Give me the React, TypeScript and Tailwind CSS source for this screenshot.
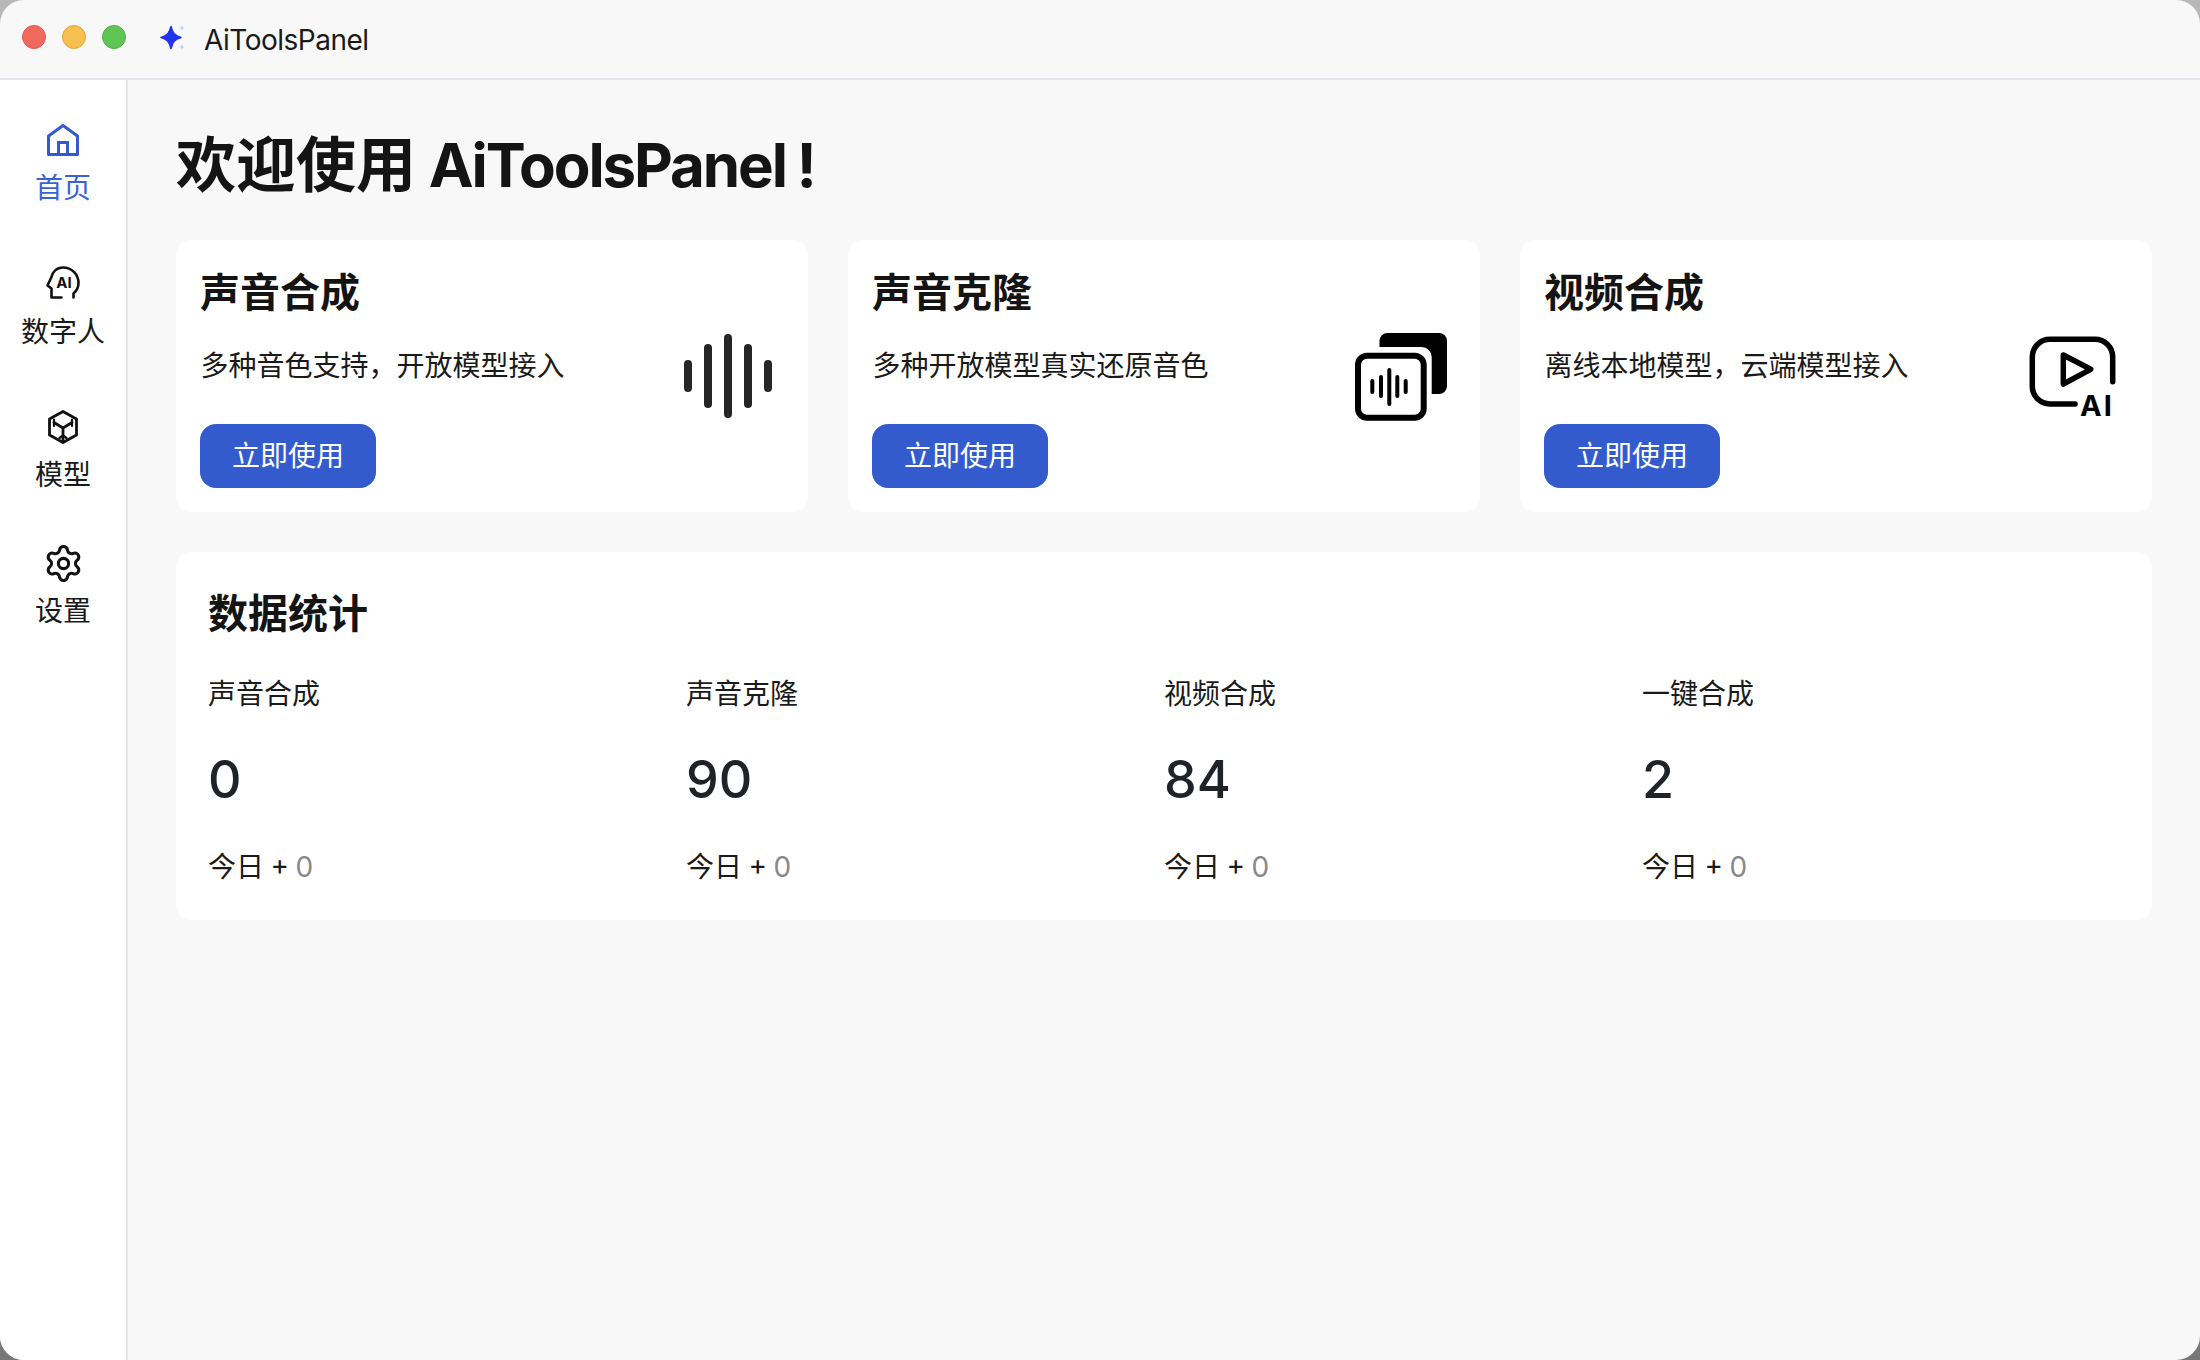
import type { ReactNode } from 'react';

const FONT = "font-['Inter','Noto_Sans_CJK_SC',sans-serif]";

function HomeIcon() {
  return (
    <svg width="34" height="34" viewBox="0 0 34 34" fill="none" stroke="#345bce" strokeWidth="3">
      <path d="M2.5 13 L17 2.5 L31.5 13 V31.5 H2.5 Z" strokeLinejoin="round" />
      <path d="M12.5 31.5 V19.5 H21.5 V31.5" />
    </svg>
  );
}

function HeadIcon() {
  return (
    <svg width="34" height="34" viewBox="0 0 34 34" fill="none" stroke="#111" strokeWidth="2.6" strokeLinecap="round" strokeLinejoin="round">
      <path d="M27.5 31.5 V27.5 C30.5 25 32.5 22 32.5 17 C32.5 8 25.5 1.5 17 1.5 C10.5 1.5 6.5 6 5.5 11 L1.5 19.5 L5.5 22.5 V31.5 H15.5" />
      <text x="18" y="21.5" textAnchor="middle" fontSize="15" fontWeight="700" fontFamily="Inter" fill="#111" stroke="none">AI</text>
    </svg>
  );
}

function CubeIcon() {
  return (
    <svg width="34" height="34" viewBox="0 0 34 34" fill="none" stroke="#111" strokeWidth="2.8" strokeLinejoin="round" strokeLinecap="round">
      <path d="M17 1.5 L30.5 9 V25 L17 32.5 L3.5 25 V9 Z" />
      <path d="M8 12.5 L17 18 L26 12.5 M17 18 V31" />
      <path d="M8 9.5 V12.5 L8 16 M26 9.5 V12.5 L26 16 M13.5 28 L17 25.5 L20.5 28" strokeWidth="2.2" />
    </svg>
  );
}

function GearIcon() {
  return (
    <svg className="shrink-0" width="41" height="41" viewBox="0 0 24 24" fill="none" stroke="#111" strokeWidth="1.8" strokeLinecap="round" strokeLinejoin="round">
      <path d="M9.671 4.136a2.34 2.34 0 0 1 4.659 0 2.34 2.34 0 0 0 3.319 1.915 2.34 2.34 0 0 1 2.33 4.033 2.34 2.34 0 0 0 0 3.831 2.34 2.34 0 0 1-2.33 4.033 2.34 2.34 0 0 0-3.319 1.915 2.34 2.34 0 0 1-4.659 0 2.34 2.34 0 0 0-3.32-1.915 2.34 2.34 0 0 1-2.33-4.033 2.34 2.34 0 0 0 0-3.831A2.34 2.34 0 0 1 6.35 6.051a2.34 2.34 0 0 0 3.319-1.915" />
      <circle cx="12" cy="12" r="3" />
    </svg>
  );
}

function WaveIcon() {
  return (
    <svg width="112" height="112" viewBox="0 0 112 112" fill="none" stroke="#262626" strokeWidth="8" strokeLinecap="round">
      <path d="M16 44 V68 M36 28 V84 M56 18 V94 M76 28 V84 M96 44 V68" />
    </svg>
  );
}

function CloneIcon() {
  return (
    <svg width="112" height="112" viewBox="0 0 112 112" fill="none">
      <path d="M35.5 21 a8 8 0 0 1 8-8 H95 a8 8 0 0 1 8 8 V66 a8 8 0 0 1-8 8 H87.7 V37 a10 10 0 0 0-10-10 H35.5 Z" fill="#000" />
      <rect x="14" y="35.7" width="65.7" height="62" rx="9" stroke="#000" strokeWidth="6" />
      <path d="M28.3 61 V72 M37 57 V76 M45.3 50 V84 M53.3 57 V76 M61.7 61 V72" stroke="#000" strokeWidth="4" strokeLinecap="round" />
    </svg>
  );
}

function VideoAiIcon() {
  return (
    <svg width="112" height="112" viewBox="0 0 112 112" fill="none" stroke="#000" strokeWidth="5.5" strokeLinecap="round" strokeLinejoin="round">
      <path d="M96.7 61.7 V37 a17.7 17.7 0 0 0-17.7-17.7 H34 a17.7 17.7 0 0 0-17.7 17.7 V66.3 a17.7 17.7 0 0 0 17.7 17.7 H59" />
      <path d="M47.3 35 L74.7 49.3 L47.3 64 Z" />
      <text x="64" y="95.5" fontSize="29" fontWeight="700" fontFamily="Inter" letterSpacing="2" fill="#000" stroke="none">AI</text>
    </svg>
  );
}

function NavItem({ icon, label, active, className, labelClass }: { icon: ReactNode; label: string; active?: boolean; className?: string; labelClass?: string }) {
  return (
    <div className={`flex flex-col items-center ${className ?? ''}`}>
      <div className="flex h-[36px] w-[36px] items-center justify-center">{icon}</div>
      <div className={`text-[28px] leading-[40px] ${labelClass ?? 'mt-[10px]'} ${active ? 'text-[#3a62d6]' : 'text-[#1a1a1a]'}`}>{label}</div>
    </div>
  );
}

function FeatureCard({ title, desc, icon }: { title: string; desc: string; icon: ReactNode }) {
  return (
    <div className="flex h-[272px] items-center justify-between rounded-[16px] bg-white p-6">
      <div>
        <div className="text-[40px] font-bold leading-[58px] text-[#141414]">{title}</div>
        <div className="ml-[0.5px] mt-[24px] text-[28px] leading-[40px] text-[#1a1a1a]">{desc}</div>
        <button className="mt-[38px] h-[64px] w-[176px] rounded-[16px] bg-[#345bce] text-[28px] text-white">立即使用</button>
      </div>
      {icon}
    </div>
  );
}

function Stat({ label, value }: { label: string; value: string }) {
  return (
    <div>
      <div className="text-[28px] leading-[40px] text-[#1a1a1a]">{label}</div>
      <div className="mt-[36px] text-[52px] font-medium leading-[60px] text-[#1f2329]">{value}</div>
      <div className="mt-[37px] text-[28px] leading-[40px] text-[#1a1a1a] [word-spacing:-1.4px]">
        今日 + <span className="text-[#888888]">0</span>
      </div>
    </div>
  );
}

export default function App() {
  return (
    <div className={`h-[1360px] w-[2200px] bg-gradient-to-b from-[#b8b8b8] to-[#777777] ${FONT}`}>
      <div className="flex h-full flex-col overflow-hidden rounded-[24px] bg-[#f8f8f8]">
        {/* title bar */}
        <div className="flex h-[80px] shrink-0 items-center border-b-2 border-[#e4e4ea] pb-[4px] pl-[22px]">
          <div className="flex gap-[16px]">
            <span className="h-[24px] w-[24px] rounded-full border border-[#dd5a50] bg-[#f0695f]" />
            <span className="h-[24px] w-[24px] rounded-full border border-[#e0a83f] bg-[#f7bf4f]" />
            <span className="h-[24px] w-[24px] rounded-full border border-[#4fae45] bg-[#5fc655]" />
          </div>
          <svg className="ml-[34px] mt-[4px]" width="28" height="28" viewBox="0 0 28 28">
            <path d="M11 1.5 C12.5 8 14.5 10.5 21 12.5 C14.5 14.5 12.5 17 11 23.5 C9.5 17 7.5 14.5 1 12.5 C7.5 10.5 9.5 8 11 1.5 Z" fill="#2233ee" stroke="#2233ee" strokeWidth="1.6" strokeLinejoin="round" />
            <path d="M22 0 C22.4 2 23 2.6 25 3 C23 3.4 22.4 4 22 6 C21.6 4 21 3.4 19 3 C21 2.6 21.6 2 22 0 Z" fill="#bcd0fb" />
            <path d="M22 19 C22.4 21 23 21.6 25 22 C23 22.4 22.4 23 22 25 C21.6 23 21 22.4 19 22 C21 21.6 21.6 21 22 19 Z" fill="#bcd0fb" />
          </svg>
          <div className="ml-[16px] mt-[6px] text-[28px] tracking-[-0.5px] text-[#1a1a1a]">AiToolsPanel</div>
        </div>

        <div className="flex min-h-0 flex-1">
          {/* sidebar */}
          <div className="flex w-[128px] shrink-0 flex-col border-r-2 border-[#e4e4ea] bg-white pt-[42px]">
            <NavItem icon={<HomeIcon />} label="首页" active />
            <NavItem icon={<HeadIcon />} label="数字人" className="mt-[57px]" labelClass="mt-[11px]" />
            <NavItem icon={<CubeIcon />} label="模型" className="mt-[57px]" />
            <NavItem icon={<GearIcon />} label="设置" className="mt-[50px]" />
          </div>

          {/* main */}
          <div className="flex-1 px-12 pt-12">
            <div className="text-[60px] font-bold leading-[74px] text-[#141414] [word-spacing:-1.5px]">
              欢迎使用 <span className="tracking-[-2.1px]">AiToolsPanel !</span>
            </div>
            <div className="mt-[38px] grid grid-cols-3 gap-10">
              <FeatureCard title="声音合成" desc="多种音色支持，开放模型接入" icon={<WaveIcon />} />
              <FeatureCard title="声音克隆" desc="多种开放模型真实还原音色" icon={<CloneIcon />} />
              <FeatureCard title="视频合成" desc="离线本地模型，云端模型接入" icon={<VideoAiIcon />} />
            </div>
            <div className="mt-10 h-[368px] rounded-[16px] bg-white px-8 pt-[33px]">
              <div className="text-[40px] font-bold leading-[58px] text-[#141414]">数据统计</div>
              <div className="mt-[31px] grid grid-cols-4">
                <Stat label="声音合成" value="0" />
                <Stat label="声音克隆" value="90" />
                <Stat label="视频合成" value="84" />
                <Stat label="一键合成" value="2" />
              </div>
            </div>
          </div>
        </div>
      </div>
    </div>
  );
}
